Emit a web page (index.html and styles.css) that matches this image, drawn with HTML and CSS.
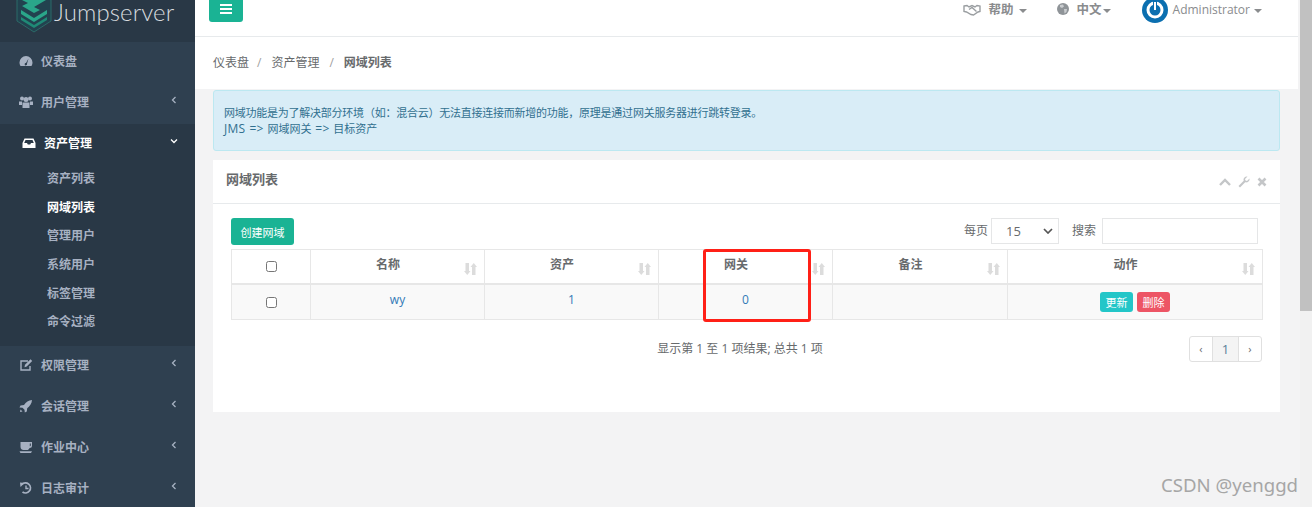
FILE: index.html
```html
<!DOCTYPE html>
<html lang="zh-CN">
<head>
    <meta charset="UTF-8">
    <meta name="viewport" content="width=device-width, initial-scale=1.0">
    <title>网域列表</title>
    <link rel="stylesheet" href="styles.css">
</head>
<body>
    <nav class="sidebar">
        <div class="logo">
            <svg class="logo-mark" viewBox="0 0 36 44">
                <path d="M18 1 L35 11 V32 L18 43 L1 32 V11 Z" fill="#22424f" stroke="#2b6a68" stroke-width="1"/>
                <path d="M6 11 L18 4 L30 11 L18 18 L24 21 L18 24 L6 17 L12 14 Z" fill="#2aa68a"/>
                <path d="M5 21 L18 29 L31 21 V25 L18 33 L5 25 Z" fill="#2aa68a"/>
                <path d="M5 28 L18 36 L31 28 V31 L18 39 L5 31 Z" fill="#1f8a76"/>
            </svg>
            <span class="logo-text">Jumpserver</span>
        </div>
        <ul class="menu">
            <li class="menu-item">
                <svg class="menu-icon" viewBox="0 0 14 14"><path d="M7 2 A6.5 6.5 0 0 0 .5 8.5 C.5 10 1 11 1.500 12 H12.500 C13 11 13.500 10 13.500 8.500 A6.500 6.500 0 0 0 7 2 Z M7 9 L9.500 4.500 L8 9.800 A1.200 1.200 0 1 1 7 9 Z" fill="#a7b1c2" fill-rule="evenodd"/></svg>
                <span>仪表盘</span>
            </li>
            <li class="menu-item">
                <svg class="menu-icon" viewBox="0 0 14 14"><circle cx="3" cy="3.500" r="2" fill="#a7b1c2"/><circle cx="11" cy="3.500" r="2" fill="#a7b1c2"/><circle cx="7" cy="4.500" r="2.500" fill="#a7b1c2"/><path d="M0 6.500 H3 V10 H0 Z M11 6.500 H14 V10 H11 Z M3.500 7.500 H10.500 V13 H3.500 Z" fill="#a7b1c2"/></svg>
                <span>用户管理</span>
                <svg class="chevron" viewBox="0 0 8 8"><path d="M5.500 1 L2.500 4 L5.500 7" fill="none" stroke="#a7b1c2" stroke-width="1.300"/></svg>
            </li>
            <li class="menu-group">
                <div class="menu-item active">
                    <svg class="menu-icon" viewBox="0 0 14 14"><path d="M2.500 2.500 H11.500 L13.500 7 V12 H.5 V7 Z M3.500 4 L2.200 7 H5 L5.800 8.500 H8.200 L9 7 H11.800 L10.500 4 Z" fill="#fff" fill-rule="evenodd"/></svg>
                    <span>资产管理</span>
                    <svg class="chevron" viewBox="0 0 8 8"><path d="M1 2.500 L4 5.500 L7 2.500" fill="none" stroke="#fff" stroke-width="1.300"/></svg>
                </div>
                <ul class="submenu">
                    <li>资产列表</li>
                    <li class="current">网域列表</li>
                    <li>管理用户</li>
                    <li>系统用户</li>
                    <li>标签管理</li>
                    <li>命令过滤</li>
                </ul>
            </li>
            <li class="menu-item">
                <svg class="menu-icon" viewBox="0 0 14 14"><path d="M9 3 H2 V12 H11 V8" fill="none" stroke="#a7b1c2" stroke-width="1.400"/><path d="M5.500 9.200 L6 6.800 L11.500 1.300 L13.200 3 L7.700 8.500 Z" fill="#a7b1c2"/></svg>
                <span>权限管理</span>
                <svg class="chevron" viewBox="0 0 8 8"><path d="M5.500 1 L2.500 4 L5.500 7" fill="none" stroke="#a7b1c2" stroke-width="1.300"/></svg>
            </li>
            <li class="menu-item">
                <svg class="menu-icon" viewBox="0 0 14 14"><path d="M13 1 C9.500 1.200 7 3 5 6 L1.500 6.500 L.5 8.500 L3.500 8.800 L5.500 10.800 L5.800 13.500 L7.800 12.500 L8.200 9.200 C11 7 12.800 4.500 13 1 Z M1.500 10.500 L3.500 12.500 L1 13 Z" fill="#a7b1c2"/></svg>
                <span>会话管理</span>
                <svg class="chevron" viewBox="0 0 8 8"><path d="M5.500 1 L2.500 4 L5.500 7" fill="none" stroke="#a7b1c2" stroke-width="1.300"/></svg>
            </li>
            <li class="menu-item">
                <svg class="menu-icon" viewBox="0 0 14 14"><path d="M1.500 2 H13 V5.500 A2.500 2.500 0 0 1 10.500 8 C10 9.500 9 10 8 10 H4.500 C3 10 1.500 9 1.500 7 Z M10.800 3.500 V6.300 A1.200 1.200 0 0 0 11.800 5 V3.500 Z M.5 11.300 H13 L12 13 H1.500 Z" fill="#a7b1c2" fill-rule="evenodd"/></svg>
                <span>作业中心</span>
                <svg class="chevron" viewBox="0 0 8 8"><path d="M5.500 1 L2.500 4 L5.500 7" fill="none" stroke="#a7b1c2" stroke-width="1.300"/></svg>
            </li>
            <li class="menu-item">
                <svg class="menu-icon" viewBox="0 0 14 14"><path d="M2.800 3.500 A5 5 0 1 1 3.500 11" fill="none" stroke="#a7b1c2" stroke-width="1.800"/><path d="M1 1.500 L5.500 2 L1.500 6 Z" fill="#a7b1c2"/><path d="M7 4.500 V7.500 H9.500" fill="none" stroke="#a7b1c2" stroke-width="1.400"/></svg>
                <span>日志审计</span>
                <svg class="chevron" viewBox="0 0 8 8"><path d="M5.500 1 L2.500 4 L5.500 7" fill="none" stroke="#a7b1c2" stroke-width="1.300"/></svg>
            </li>
        </ul>
    </nav>

    <main class="main">
        <header class="navbar">
            <button class="menu-toggle">
                <svg viewBox="0 0 12 10"><path d="M0 0 H12 V2 H0 Z M0 4 H12 V6 H0 Z M0 8 H12 V10 H0 Z" fill="#fff"/></svg>
            </button>
            <div class="navbar-right">
                <svg class="nav-hand" viewBox="0 0 18 12"><path d="M1 2 L4 1.500 L6 3 L9 1.500 L12 3 L14 1.500 L17 2 V7.500 L15 8 L10.500 11 L8 10.500 L3.500 8 L1 7.500 Z" fill="none" stroke="#9a9ea1" stroke-width="1.400"/><path d="M6 5.500 L9 3.500 L13.500 7.500" fill="none" stroke="#9a9ea1" stroke-width="1.400"/></svg>
                <span class="nav-link help">帮助<i class="caret"></i></span>
                <svg class="nav-globe" viewBox="0 0 12 12"><circle cx="6" cy="6" r="6" fill="#8f9498"/><path d="M3 2 L6 1.500 L7 3.500 L5 5 L3 4 Z M7 6 L10 6 L9.500 9 L7.500 10.500 Z" fill="#c9cccf"/></svg>
                <span class="nav-link lang">中文<i class="caret tight"></i></span>
                <svg class="avatar" viewBox="0 0 26 26"><circle cx="13" cy="13" r="13" fill="#0b6fb0"/><circle cx="13" cy="13" r="7" fill="none" stroke="#fff" stroke-width="3"/><rect x="11" y="3" width="4" height="9" fill="#0b6fb0"/><rect x="12" y="5" width="2" height="8" fill="#fff"/></svg>
                <span class="nav-user">Administrator<i class="caret"></i></span>
            </div>
        </header>

        <div class="breadcrumb">
            <span>仪表盘</span><em>/</em><span>资产管理</span><em>/</em><strong>网域列表</strong>
        </div>

        <div class="content">
            <div class="alert">
                <p class="alert-main">网域功能是为了解决部分环境（如：混合云）无法直接连接而新增的功能，原理是通过网关服务器进行跳转登录。</p>
                <p class="alert-path"><span>JMS =&gt;</span> 网域网关 <span>=&gt;</span> 目标资产</p>
            </div>

            <section class="panel">
                <div class="panel-title">
                    <h5>网域列表</h5>
                    <div class="panel-tools">
                        <svg viewBox="0 0 12 8"><path d="M1 7 L6 2 L11 7" fill="none" stroke="#c4c6c8" stroke-width="2.400"/></svg>
                        <svg viewBox="0 0 12 12"><path d="M11.500 2.500 L9 5 L7.500 4.500 L7 3 L9.500 .5 C7.500 0 5.500 1.500 5.500 3.500 L5.700 4.800 L.5 10 L2 11.500 L7.200 6.300 C9.500 7 12 5 11.500 2.500 Z" fill="#c4c6c8"/></svg>
                        <svg viewBox="0 0 10 10"><path d="M1.500 1.500 L8.500 8.500 M8.500 1.500 L1.500 8.500" stroke="#c4c6c8" stroke-width="2.600"/></svg>
                    </div>
                </div>
                <div class="panel-body">
                    <div class="toolbar">
                        <button class="btn-create">创建网域</button>
                        <div class="filters">
                            <label class="per-page">每页</label>
                            <div class="select">15<svg viewBox="0 0 10 6"><path d="M1 1 L5 5 L9 1" fill="none" stroke="#555" stroke-width="1.700"/></svg></div>
                            <label class="search">搜索</label>
                            <input class="search-input" type="text">
                        </div>
                    </div>

                    <div class="table-wrap">
                        <table class="data-table">
                            <thead>
                                <tr>
                                    <th class="col-check"><input type="checkbox"></th>
                                    <th class="col-name">名称<svg class="sort" viewBox="0 0 13 12"><path d="M1.500 0 H5 V8 H6.500 L3.250 12 L0 8 H1.500 Z M8 12 H11.500 V4 H13 L9.750 0 L6.500 4 H8 Z" fill="#dcdcdc"/></svg></th>
                                    <th class="col-name">资产<svg class="sort" viewBox="0 0 13 12"><path d="M1.500 0 H5 V8 H6.500 L3.250 12 L0 8 H1.500 Z M8 12 H11.500 V4 H13 L9.750 0 L6.500 4 H8 Z" fill="#dcdcdc"/></svg></th>
                                    <th class="col-name">网关<svg class="sort" viewBox="0 0 13 12"><path d="M1.500 0 H5 V8 H6.500 L3.250 12 L0 8 H1.500 Z M8 12 H11.500 V4 H13 L9.750 0 L6.500 4 H8 Z" fill="#dcdcdc"/></svg></th>
                                    <th class="col-note">备注<svg class="sort" viewBox="0 0 13 12"><path d="M1.500 0 H5 V8 H6.500 L3.250 12 L0 8 H1.500 Z M8 12 H11.500 V4 H13 L9.750 0 L6.500 4 H8 Z" fill="#dcdcdc"/></svg></th>
                                    <th>动作<svg class="sort" viewBox="0 0 13 12"><path d="M1.500 0 H5 V8 H6.500 L3.250 12 L0 8 H1.500 Z M8 12 H11.500 V4 H13 L9.750 0 L6.500 4 H8 Z" fill="#dcdcdc"/></svg></th>
                                </tr>
                            </thead>
                            <tbody>
                                <tr>
                                    <td class="cell-raised"><input type="checkbox"></td>
                                    <td class="link">wy</td>
                                    <td class="link">1</td>
                                    <td class="link">0</td>
                                    <td></td>
                                    <td>
                                        <button class="btn-xs btn-update">更新</button>
                                        <button class="btn-xs btn-delete">删除</button>
                                    </td>
                                </tr>
                            </tbody>
                        </table>
                        <div class="highlight"></div>
                    </div>

                    <div class="table-footer">
                        <div class="info">显示第 1 至 1 项结果; 总共 1 项</div>
                        <div class="pagination">
                            <span>‹</span>
                            <span class="page-current">1</span>
                            <span>›</span>
                        </div>
                    </div>
                </div>
            </section>
        </div>
        <div class="watermark">CSDN @yenggd</div>
    </main>

    <div class="scrollbar"><div class="thumb"></div></div>
</body>
</html>
```

FILE: styles.css
```css
* {
    box-sizing: border-box;
}
html, body {
    height: 507px;
    overflow: hidden;
}
body {
    font-family: "Open Sans", "Noto Sans CJK SC", sans-serif;
    font-size: 12px;
    color: #676a6c;
    background-color: #f3f3f4;
    margin: 0;
    display: flex;
}
ul {
    list-style: none;
    margin: 0;
    padding: 0;
}

/* sidebar */
.sidebar {
    width: 195px;
    flex: none;
    background-color: #2f4050;
    color: #a7b1c2;
    font-weight: 600;
}
.logo {
    height: 42px;
    background-color: #293846;
    display: flex;
    overflow: hidden;
    padding-left: 16px;
}
.logo-mark {
    width: 36px;
    height: 44px;
    margin-top: -11px;
    flex: none;
}
.logo-text {
    font-family: Lato, sans-serif;
    font-weight: 300;
    font-size: 24px;
    line-height: 24px;
    letter-spacing: .1px;
    color: #d7dbdf;
    margin-left: 2px;
}
.menu-item {
    height: 41px;
    display: flex;
    align-items: center;
    padding: 0 17px 3px 19px;
}
.menu-icon {
    width: 14px;
    height: 14px;
    flex: none;
    margin-right: 8px;
}
.chevron {
    width: 8px;
    height: 8px;
    margin-left: auto;
    margin-top: -5px;
}
.menu-group {
    background-color: #293846;
    height: 222px;
}
.menu-item.active {
    padding-left: 22px;
    color: #fff;
}
.submenu li {
    height: 28.7px;
    line-height: 28.7px;
    padding-left: 47px;
}
.submenu .current {
    color: #fff;
    font-weight: 700;
}

/* top bar */
.main {
    width: 1105px;
    flex: none;
    position: relative;
}
.navbar {
    height: 37px;
    margin-right: 2px;
    background-color: #fff;
    border-bottom: 1px solid #e7eaec;
    display: flex;
    justify-content: space-between;
    padding: 0 36px 0 14px;
    overflow: hidden;
}
.menu-toggle {
    width: 34px;
    height: 22px;
    border: none;
    border-radius: 0 0 3px 3px;
    background-color: #1ab394;
    padding: 0;
}
.menu-toggle svg {
    width: 12px;
    height: 10px;
    display: block;
    margin: 0 auto 4px;
}
.navbar-right {
    display: flex;
    align-items: flex-start;
    line-height: 18px;
    color: #8a8c8e;
}
.nav-hand {
    width: 18px;
    height: 12px;
    margin: 4px 8px 0 0;
}
.nav-link {
    font-size: 12.500px;
    font-weight: 600;
    color: #8a8c8e;
    margin-top: 1px;
}
.help {
    margin-right: 30px;
}
.nav-globe {
    width: 12px;
    height: 12px;
    margin: 3px 8px 0 0;
}
.lang {
    margin-right: 31px;
}
.avatar {
    width: 26px;
    height: 26px;
    margin: -3px 5px 0 0;
}
.nav-user {
    margin-top: 1px;
}
.caret {
    display: inline-block;
    vertical-align: middle;
    margin-left: 5px;
    border-top: 4px solid #8a8c8e;
    border-left: 4px solid transparent;
    border-right: 4px solid transparent;
}
.nav-user .caret {
    margin-left: 4px;
}
.caret.tight {
    margin-left: 1px;
}

/* breadcrumb */
.breadcrumb {
    height: 52px;
    margin-right: 2px;
    background-color: #fff;
    display: flex;
    align-items: center;
    padding: 0 0 2px 18px;
    color: #676a6c;
}
.breadcrumb em {
    font-style: normal;
    color: #a0a0a0;
    margin: 0 10px 0 8px;
}
.breadcrumb em:nth-of-type(2) {
    margin: 0 10px;
}
.breadcrumb strong {
    font-weight: 600;
}

.content {
    padding: 1px 20px 0 18px;
}
.alert {
    height: 61px;
    padding: 14px 10px 0;
    font-size: 11px;
    color: #31708f;
    background-color: #d9edf7;
    border: 1px solid #bce8f1;
    border-radius: 3px;
}
.alert p {
    margin: 0;
    line-height: 15.500px;
}
.alert-main {
    letter-spacing: -.24px;
}
.alert-path {
    word-spacing: 1px;
}
.alert-path span {
    font-size: 12px;
    letter-spacing: .2px;
}

/* panel */
.panel {
    margin-top: 9px;
    height: 252px;
    background-color: #fff;
}
.panel-title {
    height: 44px;
    border-bottom: 1px solid #e7eaec;
    display: flex;
    align-items: center;
    justify-content: space-between;
    padding: 0 13px;
}
.panel-title h5 {
    margin: 0;
    font-size: 13px;
    font-weight: 600;
    color: #676a6c;
    padding-bottom: 7px;
}
.panel-tools {
    display: flex;
    gap: 7px;
    align-items: center;
}
.panel-tools svg {
    width: 12px;
    height: 12px;
}
.panel-tools svg:last-child {
    width: 10px;
    height: 10px;
}
.panel-body {
    padding: 14px 17px 0 18px;
}

.toolbar {
    display: flex;
    justify-content: space-between;
    height: 31px;
}
.btn-create {
    width: 63px;
    height: 27px;
    border: none;
    border-radius: 3px;
    background-color: #1ab394;
    color: #fff;
    font: inherit;
    font-size: 11px;
    padding: 0;
}
.filters {
    display: flex;
    align-items: flex-start;
    line-height: 25px;
    padding-right: 5px;
}
.per-page {
    margin-right: 3px;
}
.select {
    width: 68px;
    height: 26px;
    border: 1px solid #e5e6e7;
    display: flex;
    align-items: center;
    justify-content: space-between;
    padding: 0 5px 0 14px;
    font-size: 13px;
}
.select svg {
    width: 10px;
    height: 6px;
}
.search {
    margin: 0 6px 0 13px;
}
.search-input {
    width: 156px;
    height: 26px;
    border: 1px solid #e5e6e7;
    padding: 0;
    background-color: #fff;
}

/* table */
.table-wrap {
    position: relative;
}
.data-table {
    width: 1032px;
    table-layout: fixed;
    border-collapse: collapse;
}
.col-check {
    width: 79px;
}
.col-name {
    width: 174px;
}
.col-note {
    width: 175px;
}
.data-table th,
.data-table td {
    border: 1px solid #e7e7e7;
    text-align: center;
    padding: 0;
}
.data-table th {
    height: 34px;
    border-bottom-width: 2px;
    font-weight: 600;
    position: relative;
    padding: 0 19px 4px 0;
}
.data-table th.col-check {
    padding: 0 0 2px;
}
.data-table td {
    height: 36px;
    background-color: #f9f9f9;
}
.data-table td.cell-raised {
    padding-bottom: 2px;
}
.data-table input {
    width: 11px;
    height: 11px;
    margin: 0;
    vertical-align: middle;
}
.sort {
    position: absolute;
    right: 7px;
    top: 13px;
    width: 13px;
    height: 12px;
}
.data-table td.link {
    color: #337ab7;
    padding-bottom: 4px;
}
.btn-xs {
    width: 33px;
    height: 20px;
    border: none;
    border-radius: 3px;
    color: #fff;
    font: inherit;
    font-size: 11px;
    padding: 0;
    vertical-align: middle;
}
.btn-update {
    background-color: #23c6c8;
}
.btn-delete {
    background-color: #ed5565;
    margin-left: 1px;
}
.highlight {
    position: absolute;
    left: 472px;
    top: 0;
    width: 108px;
    height: 73px;
    border: 3px solid #ff2017;
    border-radius: 3px;
}

.table-footer {
    display: flex;
    align-items: flex-start;
    margin-top: 16px;
    padding-right: 1px;
}
.info {
    flex: 1;
    text-align: center;
    padding-left: 60px;
    line-height: 26px;
}
.pagination {
    display: flex;
    height: 26px;
    border: 1px solid #e0e0e0;
    border-radius: 3px;
    background-color: #fff;
}
.pagination span {
    width: 22px;
    text-align: center;
    line-height: 24px;
    font-size: 11px;
}
.pagination .page-current {
    width: 27px;
    font-size: 13px;
    color: #5b7f99;
    background-color: #f4f4f4;
    border-left: 1px solid #e0e0e0;
    border-right: 1px solid #e0e0e0;
}

.watermark {
    position: absolute;
    right: 2px;
    bottom: 10px;
    font-family: "Noto Sans", sans-serif;
    font-size: 18.600px;
    line-height: 24px;
    color: #a6a6a6;
}

/* fake page scrollbar */
.scrollbar {
    width: 12px;
    flex: none;
    background-color: #f1f1f1;
}
.thumb {
    height: 311px;
    background-color: #c1c1c1;
}
```
